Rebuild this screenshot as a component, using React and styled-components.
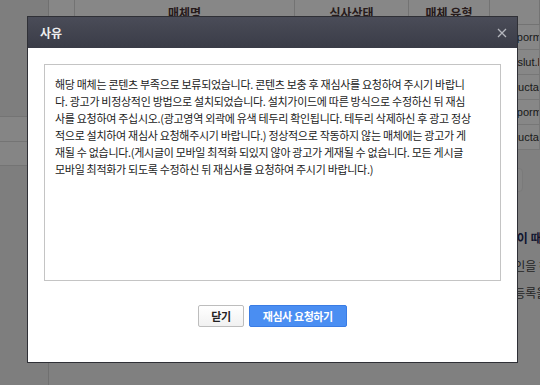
import { Fragment } from "react";
import styled, { createGlobalStyle } from "styled-components";

const GlobalStyle = createGlobalStyle`
  html, body {
    margin: 0;
    padding: 0;
    background: #f2f2f2;
  }
  * {
    box-sizing: border-box;
  }
`;

const Screen = styled.div`
  position: relative;
  width: 540px;
  height: 385px;
  overflow: hidden;
  font-family: "Liberation Sans", "Noto Sans CJK KR", sans-serif;
`;

// page behind the dialog
const Page = styled.div`
  display: flex;
  height: 100%;
  background: #f2f2f2;
`;

const Sidebar = styled.div`
  width: 49px;
  flex-shrink: 0;
  border-right: 1px solid #d4d4d4;
  padding-top: 116px;
  background: #efefef;
`;

const MenuItem = styled.div`
  height: 25px;
  border-top: 1px solid #dcdcdc;
  border-bottom: ${(props) => (props.last ? "1px solid #dcdcdc" : "none")};
  background: #fcfcfc;
`;

const Main = styled.div`
  flex: 1;
  min-width: 0;
`;

const Table = styled.div`
  display: grid;
  grid-template-columns: 26px 220px 114px 81px 1fr;
`;

const HeadCell = styled.div`
  height: 25px;
  display: flex;
  align-items: center;
  justify-content: center;
  background: #ffffff;
  border-right: 1px solid #d9d9d9;
  border-bottom: 1px solid #d9d9d9;
  font-family: "Noto Sans CJK KR", sans-serif;
  font-size: 12px;
  font-weight: 700;
  color: #4a3434;
`;

const Cell = styled.div`
  height: 25px;
  display: flex;
  align-items: center;
  padding: 0 6px;
  background: #ffffff;
  border-right: 1px solid #e2e2e2;
  border-bottom: 1px solid #e0e0e0;
  font-size: 11px;
  color: #333;
  white-space: nowrap;
  overflow: hidden;
`;

const ToolRow = styled.div`
  display: flex;
  justify-content: flex-end;
  padding: 18px 17px 0 0;
`;

const ToolBox = styled.div`
  width: 90px;
  height: 24px;
  border: 1px solid #e6e6e6;
  border-radius: 4px;
  background: #f7f7f7;
`;

const Notice = styled.div`
  padding: 32px 0 0 66px;
  font-family: "Noto Sans CJK KR", sans-serif;
  font-size: 12px;
  white-space: nowrap;
`;

const NoticeLine = styled.div`
  height: 27.5px;
  line-height: 27.5px;
  font-weight: ${(props) => (props.bold ? 700 : 400)};
  color: ${(props) => (props.bold ? "#1e2a5a" : "#444")};
`;

// dialog
const Overlay = styled.div`
  position: absolute;
  inset: 0;
  background: rgba(0, 0, 0, 0.47);
  padding: 16px 0 0 27px;
`;

const Dialog = styled.div`
  width: 491px;
  border: 1px solid #2f3036;
  background: #ffffff;
`;

const DialogHeader = styled.div`
  height: 31px;
  display: flex;
  align-items: center;
  justify-content: space-between;
  padding: 0 8px 0 12px;
  background: linear-gradient(#4a4c58, #3a3c47);
`;

const DialogTitle = styled.span`
  font-family: "Noto Sans CJK KR", sans-serif;
  font-size: 12px;
  font-weight: 700;
  color: #eeeeee;
`;

const CloseButton = styled.button`
  width: 14px;
  height: 14px;
  padding: 0;
  border: none;
  background: transparent;
  display: flex;
  align-items: center;
  justify-content: center;
  cursor: pointer;
`;

const DialogBody = styled.div`
  padding: 16px 16px 35px;
`;

const ReasonBox = styled.div`
  height: 217px;
  border: 1px solid #c4c4c4;
  padding: 11px 10px 7px;
  font-family: "Noto Sans CJK KR", sans-serif;
  font-size: 11px;
  letter-spacing: -0.3px;
  line-height: 17.1px;
  color: #222;
  white-space: pre;
`;

const ButtonRow = styled.div`
  display: flex;
  justify-content: center;
  gap: 5px;
  margin-top: 24px;
`;

const Button = styled.button`
  height: 22px;
  padding: 0 ${(props) => (props.primary ? "13px" : "12px")};
  border: 1px solid ${(props) => (props.primary ? "#3a7ce4" : "#bdbdbd")};
  border-radius: 2px;
  background: ${(props) =>
    props.primary ? "#4a8ef2" : "linear-gradient(#ffffff, #f1f1f1)"};
  color: ${(props) => (props.primary ? "#ffffff" : "#222")};
  font-family: "Noto Sans CJK KR", sans-serif;
  font-size: 11px;
  letter-spacing: -0.4px;
  font-weight: 700;
  cursor: pointer;
`;

const columns = ["", "매체명", "심사상태", "매체 유형", ""];

const rows = [
  "blogporm.com",
  "mobslut.blog.me",
  "productable.co.kr",
  "blogporm.com",
  "productable.co.kr",
];

const reasonLines = [
  "해당 매체는 콘텐츠 부족으로 보류되었습니다. 콘텐츠 보충 후 재심사를 요청하여 주시기 바랍니",
  "다. 광고가 비정상적인 방법으로 설치되었습니다. 설치가이드에 따른 방식으로 수정하신 뒤 재심",
  "사를 요청하여 주십시오.(광고영역 외곽에 유색 테두리 확인됩니다. 테두리 삭제하신 후 광고 정상",
  "적으로 설치하여 재심사 요청해주시기 바랍니다.) 정상적으로 작동하지 않는 매체에는 광고가 게",
  "재될 수 없습니다.(게시글이 모바일 최적화 되있지 않아 광고가 게재될 수 없습니다. 모든 게시글",
  "모바일 최적화가 되도록 수정하신 뒤 재심사를 요청하여 주시기 바랍니다.)",
];

const App = () => {
  return (
    <>
      <GlobalStyle />
      <Screen>
        <Page>
          <Sidebar>
            <MenuItem />
            <MenuItem last />
          </Sidebar>
          <Main>
            <Table>
              {columns.map((c, i) => (
                <HeadCell key={i}>{c}</HeadCell>
              ))}
              {rows.map((url, i) => (
                <Fragment key={i}>
                  <Cell />
                  <Cell />
                  <Cell />
                  <Cell />
                  <Cell>{url}</Cell>
                </Fragment>
              ))}
            </Table>
            <ToolRow>
              <ToolBox />
            </ToolRow>
            <Notice>
              <NoticeLine bold>
                ※ 심사가 보류된 매체는 보류 사유를 꼼꼼히 확인하신 뒤 재심사를 요청해 주세요. 이 때
              </NoticeLine>
              <NoticeLine>
                보류 사유에 안내된 내용을 모두 수정하신 뒤 광고 영역과 설치 상태를 다시 한번 확인을 해 주세요.
              </NoticeLine>
              <NoticeLine>
                수정이 완료되면 재심사 요청하기 버튼을 눌러 다시 한번 심사를 받으신 후 꼭 매체 등록을 진행합니다.
              </NoticeLine>
            </Notice>
          </Main>
        </Page>

        <Overlay>
          <Dialog>
            <DialogHeader>
              <DialogTitle>사유</DialogTitle>
              <CloseButton aria-label="닫기">
                <svg width="10" height="10" viewBox="0 0 10 10">
                  <path
                    d="M1 1 L9 9 M9 1 L1 9"
                    stroke="#b4b6bd"
                    strokeWidth="1.3"
                    fill="none"
                  />
                </svg>
              </CloseButton>
            </DialogHeader>
            <DialogBody>
              <ReasonBox>{reasonLines.join("\n")}</ReasonBox>
              <ButtonRow>
                <Button>닫기</Button>
                <Button primary>재심사 요청하기</Button>
              </ButtonRow>
            </DialogBody>
          </Dialog>
        </Overlay>
      </Screen>
    </>
  );
};

export default App;
